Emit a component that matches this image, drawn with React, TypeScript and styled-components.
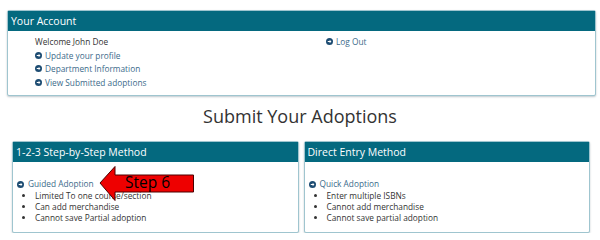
import styled, { createGlobalStyle } from 'styled-components';

const GlobalStyle = createGlobalStyle`
  html, body {
    margin: 0;
    padding: 0;
    background: #ffffff;
  }
  body {
    font-family: "Open Sans", "DejaVu Sans", sans-serif;
    color: #333333;
  }
`;

const Page = styled.main`
  width: 600px;
  padding-top: 10px;
  box-sizing: border-box;
`;

const Panel = styled.section`
  position: relative;
  background: #ffffff;
  border: 1px solid #9fc5cf;
  border-radius: 2px;
  box-shadow: 0 1px 2px rgba(0, 40, 60, 0.25);
`;

const AccountPanel = styled(Panel)`
  margin: 0 4px 0 7px;
`;

const PanelHeader = styled.h2`
  margin: 0;
  height: 20px;
  line-height: 20px;
  padding: 0 3px;
  background: #04697f;
  color: #ffffff;
  font-size: 10.5px;
  font-weight: 400;
`;

const AccountBody = styled.div`
  display: grid;
  grid-template-columns: 291px 1fr;
  padding: 4px 0 6px 27px;
`;

const LinkList = styled.ul`
  list-style: none;
  margin: 0;
  padding: 0;
  font-size: 8.3px;
  line-height: 13.5px;
`;

const LinkItem = styled.li`
  display: flex;
  align-items: center;
  gap: 3px;
  color: #3b6a8a;
`;

const PlainItem = styled.li`
  color: #333333;
`;

const PageTitle = styled.h1`
  margin: 7px 0 12px;
  text-align: center;
  font-size: 18px;
  line-height: 26px;
  font-weight: 400;
  color: #333333;
`;

const MethodRow = styled.div`
  display: grid;
  grid-template-columns: 1fr 1fr;
  gap: 5px;
  padding: 0 10px 0 12px;
`;

const MethodBody = styled.div`
  padding: 16px 4px 9px;
  font-size: 8.3px;
`;

const MethodLink = styled.div`
  display: flex;
  align-items: center;
  gap: 4px;
  line-height: 12px;
  color: #3b6a8a;
`;

const Bullets = styled.ul`
  margin: 0;
  padding-left: 18px;
  list-style: disc;
  line-height: 11px;
  color: #333333;
`;

const Callout = styled.div`
  position: absolute;
  left: 85px;
  top: 23px;
  width: 97px;
  height: 37px;
`;

const CalloutText = styled.span`
  position: absolute;
  left: 27px;
  top: 7px;
  font-size: 15.5px;
  line-height: 20px;
  color: #000000;
`;

function CircleArrow() {
  return (
    <svg width="7" height="7" viewBox="0 0 16 16" aria-hidden="true">
      <circle cx="8" cy="8" r="8" fill="#1d4c72" />
      <path d="M4 6.6h4.4V4l4 4-4 4V9.4H4z" fill="#ffffff" />
    </svg>
  );
}

function Arrow() {
  return (
    <svg width="97" height="37" viewBox="0 0 97 37" aria-hidden="true">
      <polygon
        points="2,18 17,1.5 17,10 95.5,10 95.5,27 17,27 17,35.5"
        fill="#ee0000"
        stroke="#4a0000"
        strokeWidth="1"
        strokeLinejoin="miter"
      />
    </svg>
  );
}

const accountLinks = ['Update your profile', 'Department Information', 'View Submitted adoptions'];

const methods = [
  {
    title: '1-2-3 Step-by-Step Method',
    link: 'Guided Adoption',
    points: ['Limited To one course/section', 'Can add merchandise', 'Cannot save Partial adoption'],
    callout: true,
  },
  {
    title: 'Direct Entry Method',
    link: 'Quick Adoption',
    points: ['Enter multiple ISBNs', 'Cannot add merchandise', 'Cannot save partial adoption'],
    callout: false,
  },
];

export default function App() {
  return (
    <>
      <GlobalStyle />
      <Page>
        <AccountPanel>
          <PanelHeader>Your Account</PanelHeader>
          <AccountBody>
            <LinkList>
              <PlainItem>Welcome John Doe</PlainItem>
              {accountLinks.map((label) => (
                <LinkItem key={label}>
                  <CircleArrow />
                  {label}
                </LinkItem>
              ))}
            </LinkList>
            <LinkList>
              <LinkItem>
                <CircleArrow />
                Log Out
              </LinkItem>
            </LinkList>
          </AccountBody>
        </AccountPanel>

        <PageTitle>Submit Your Adoptions</PageTitle>

        <MethodRow>
          {methods.map((m) => (
            <Panel key={m.title}>
              <PanelHeader>{m.title}</PanelHeader>
              <MethodBody>
                <MethodLink>
                  <CircleArrow />
                  {m.link}
                </MethodLink>
                <Bullets>
                  {m.points.map((p) => (
                    <li key={p}>{p}</li>
                  ))}
                </Bullets>
              </MethodBody>
              {m.callout && (
                <Callout>
                  <Arrow />
                  <CalloutText>Step 6</CalloutText>
                </Callout>
              )}
            </Panel>
          ))}
        </MethodRow>
      </Page>
    </>
  );
}
